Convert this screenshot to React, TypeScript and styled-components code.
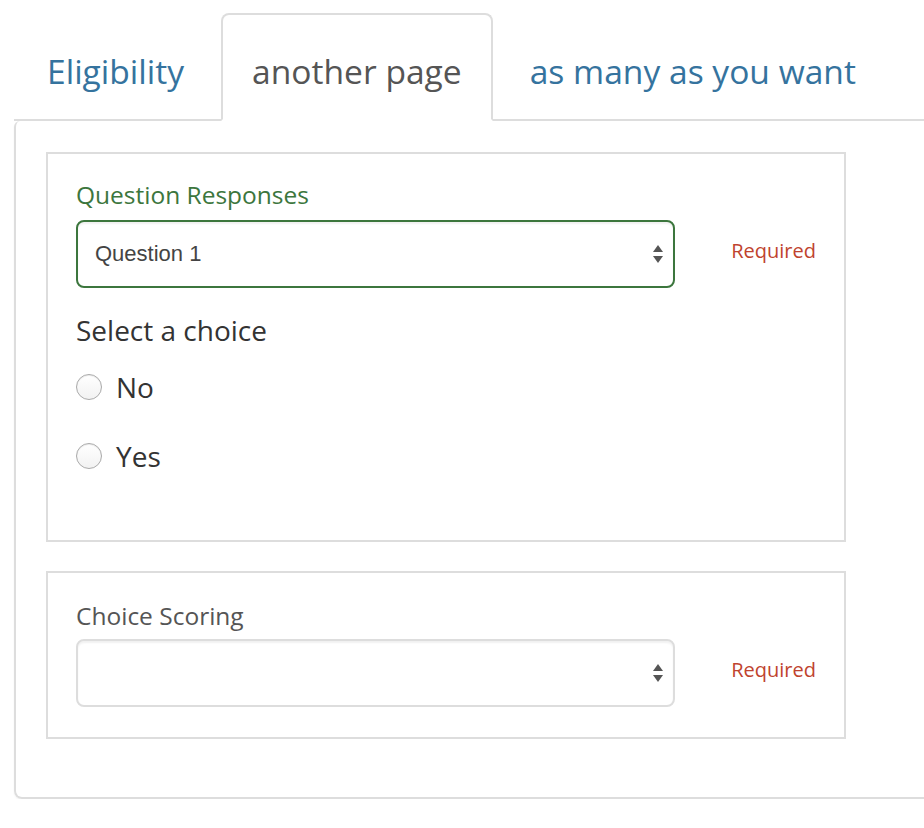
import React from "react";
import styled, { createGlobalStyle } from "styled-components";

const Global = createGlobalStyle`
  html, body { margin: 0; padding: 0; background: #fff; overflow: hidden; }
  body { font-family: "Open Sans", "Noto Sans", sans-serif; }
  * { box-sizing: border-box; }
`;

const Page = styled.div`
  padding: 13px 0 0 14px;
  width: 960px;
`;

const Nav = styled.ul`
  list-style: none;
  margin: 0;
  padding: 0 0 0 2px;
  display: flex;
  border-bottom: 2px solid #ddd;
`;

const Tab = styled.li<{ $active?: boolean }>`
  margin: 0 6px -2px 0;
  padding: 33px 29px 25px;
  font-size: 33.6px;
  line-height: 46px;
  color: ${(p) => (p.$active ? "#555" : "#35739e")};
  background: ${(p) => (p.$active ? "#fff" : "transparent")};
  border: 2px solid ${(p) => (p.$active ? "#ddd" : "transparent")};
  border-bottom-color: ${(p) => (p.$active ? "#fff" : "transparent")};
  border-radius: 8px 8px 0 0;
  white-space: nowrap;
`;

const Panel = styled.div`
  border: 2px solid #ddd;
  border-top: none;
  border-radius: 6px 6px 8px 8px;
  padding: 31px 30px 58px;
  box-shadow: 0 1px 2px rgba(0, 0, 0, 0.06);
`;

const Box = styled.div<{ $pad: string }>`
  width: 800px;
  border: 2px solid #ddd;
  padding: ${(p) => p.$pad};
  & + & { margin-top: 29px; }
`;

const Label = styled.div<{ $tone: "green" | "grey"; $gap: number }>`
  font-size: 24.5px;
  line-height: 34px;
  color: ${(p) => (p.$tone === "green" ? "#3c763d" : "#555")};
  margin-bottom: ${(p) => p.$gap}px;
`;

const Row = styled.div`
  display: flex;
  align-items: center;
  gap: 56px;
`;

const SelectBox = styled.div<{ $ok?: boolean }>`
  width: 600px;
  height: 68px;
  border: 2px solid ${(p) => (p.$ok ? "#3c763d" : "#ddd")};
  border-radius: 8px;
  box-shadow: inset 0 2px 2px rgba(0, 0, 0, 0.06);
  display: flex;
  align-items: center;
  justify-content: space-between;
  padding: 0 9px 0 17px;
  font-family: "Liberation Sans", Arial, sans-serif;
  font-size: 22px;
  color: #444;
`;

const Required = styled.span`
  font-size: 20px;
  color: #c0432e;
  margin-top: -8px;
`;

const Heading = styled.div`
  font-size: 28px;
  line-height: 40px;
  color: #333;
  margin-top: 22px;
`;

const Choice = styled.label`
  display: flex;
  align-items: center;
  gap: 14px;
  font-size: 28px;
  color: #333;
  height: 69px;
`;

const Radio = styled.span`
  width: 26px;
  height: 26px;
  border-radius: 50%;
  border: 1.5px solid #aaa;
  background: linear-gradient(#fff, #f2f2f2);
  box-shadow: inset 0 1px 1px rgba(0, 0, 0, 0.08);
  flex: none;
`;

const Choices = styled.div`
  margin-top: 2px;
`;

const Arrows = () => (
  <svg width="12" height="20" viewBox="0 0 12 20" aria-hidden>
    <path d="M6 1 L11 8 L1 8 Z" fill="#555" />
    <path d="M1 12 L11 12 L6 19 Z" fill="#555" />
  </svg>
);

export default function App() {
  return (
    <>
      <Global />
      <Page>
        <Nav>
          <Tab>Eligibility</Tab>
          <Tab $active>another page</Tab>
          <Tab>as many as you want</Tab>
        </Nav>
        <Panel>
          <Box $pad="24px 28px 50px">
            <Label $tone="green" $gap={8}>Question Responses</Label>
            <Row>
              <SelectBox $ok>
                <span>Question 1</span>
                <Arrows />
              </SelectBox>
              <Required>Required</Required>
            </Row>
            <Heading>Select a choice</Heading>
            <Choices>
              <Choice>
                <Radio />
                No
              </Choice>
              <Choice>
                <Radio />
                Yes
              </Choice>
            </Choices>
          </Box>
          <Box $pad="26px 28px 30px">
            <Label $tone="grey" $gap={6}>Choice Scoring</Label>
            <Row>
              <SelectBox>
                <span />
                <Arrows />
              </SelectBox>
              <Required>Required</Required>
            </Row>
          </Box>
        </Panel>
      </Page>
    </>
  );
}
